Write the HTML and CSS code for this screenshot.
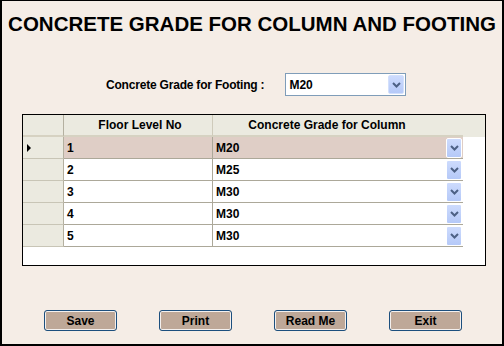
FILE: index.html
```html
<!DOCTYPE html>
<html lang="en">
<head>
  <meta charset="UTF-8">
  <title>Concrete Grade</title>
  <link rel="stylesheet" href="styles.css">
</head>
<body>
  <div class="window">
    <h1 class="title">CONCRETE GRADE FOR COLUMN AND FOOTING</h1>

    <div class="footing">
      <span class="footing-label">Concrete Grade for Footing :</span>
      <div class="combo">
        <span class="combo-text">M20</span>
        <span class="drop"><svg width="9" height="6" viewBox="0 0 9 6"><polyline points="1,1 4.5,4.5 8,1" fill="none" stroke="#4d6185" stroke-width="2"/></svg></span>
      </div>
    </div>

    <div class="grid">
      <div class="grid-head">
        <div class="rowhead"></div>
        <div class="colhead col-floor">Floor Level No</div>
        <div class="colhead col-grade">Concrete Grade for Column</div>
      </div>
      <div class="grid-row selected">
        <div class="rowhead"><span class="pointer"></span></div>
        <div class="cell">1</div>
        <div class="cell cell-combo">M20<span class="drop"><svg width="9" height="6" viewBox="0 0 9 6"><polyline points="1,1 4.5,4.5 8,1" fill="none" stroke="#4d6185" stroke-width="2"/></svg></span></div>
      </div>
      <div class="grid-row">
        <div class="rowhead"></div>
        <div class="cell">2</div>
        <div class="cell cell-combo">M25<span class="drop"><svg width="9" height="6" viewBox="0 0 9 6"><polyline points="1,1 4.5,4.5 8,1" fill="none" stroke="#4d6185" stroke-width="2"/></svg></span></div>
      </div>
      <div class="grid-row">
        <div class="rowhead"></div>
        <div class="cell">3</div>
        <div class="cell cell-combo">M30<span class="drop"><svg width="9" height="6" viewBox="0 0 9 6"><polyline points="1,1 4.5,4.5 8,1" fill="none" stroke="#4d6185" stroke-width="2"/></svg></span></div>
      </div>
      <div class="grid-row">
        <div class="rowhead"></div>
        <div class="cell">4</div>
        <div class="cell cell-combo">M30<span class="drop"><svg width="9" height="6" viewBox="0 0 9 6"><polyline points="1,1 4.5,4.5 8,1" fill="none" stroke="#4d6185" stroke-width="2"/></svg></span></div>
      </div>
      <div class="grid-row">
        <div class="rowhead"></div>
        <div class="cell">5</div>
        <div class="cell cell-combo">M30<span class="drop"><svg width="9" height="6" viewBox="0 0 9 6"><polyline points="1,1 4.5,4.5 8,1" fill="none" stroke="#4d6185" stroke-width="2"/></svg></span></div>
      </div>
    </div>

    <div class="actions">
      <button class="btn">Save</button>
      <button class="btn">Print</button>
      <button class="btn">Read Me</button>
      <button class="btn">Exit</button>
    </div>
  </div>
</body>
</html>
```

FILE: styles.css
```css
body {
  margin: 0;
  font-family: "Liberation Sans", Arial, sans-serif;
  color: #000;
}

.window {
  width: 504px;
  height: 346px;
  box-sizing: border-box;
  background-color: #f5ede6;
  border: 2px solid #000;
  border-top-width: 1px;
}

.title {
  margin: 11px 0 0;
  font-size: 20.5px;
  line-height: 24px;
  font-weight: bold;
  text-align: center;
}

/* footing grade selector */
.footing {
  display: flex;
  align-items: center;
  gap: 21px;
  margin-top: 37px;
  padding-left: 104px;
}

.footing-label {
  font-size: 12px;
  font-weight: bold;
  letter-spacing: -0.2px;
}

.combo {
  width: 121px;
  height: 23px;
  box-sizing: border-box;
  border: 1px solid #7f9db9;
  background-color: #fff;
  display: flex;
  align-items: center;
  justify-content: space-between;
  padding: 0 1px 0 3px;
}

.combo-text {
  font-size: 12px;
  font-weight: bold;
}

.drop {
  width: 16px;
  height: 19px;
  box-sizing: border-box;
  border: 1px solid #d3e0fc;
  border-radius: 2px;
  background: linear-gradient(#cddbfd, #b5c9f8);
  display: flex;
  align-items: center;
  justify-content: center;
}

/* data grid */
.grid {
  width: 464px;
  height: 152px;
  box-sizing: border-box;
  margin: 18px 0 0 20px;
  border: 1px solid #000;
  background-color: #fff;
}

.grid-head,
.grid-row {
  display: grid;
  grid-template-columns: 41px 149px 250px;
  height: 22px;
  font-size: 12px;
  font-weight: bold;
}

.grid-head {
  background-color: #ebeae0;
}

.grid-head .rowhead,
.colhead {
  border-bottom: 2px solid #d6d2c2;
}

.colhead {
  display: flex;
  align-items: center;
  justify-content: center;
  box-sizing: border-box;
}

.col-floor {
  padding-left: 4px;
  border-right: 1px solid #cfcbbb;
}

.col-grade {
  padding-right: 22px;
}

.rowhead {
  background-color: #ebeae0;
  box-sizing: border-box;
  border-right: 1px solid #b4b0a0;
  border-bottom: 1px solid #c8c5b6;
  display: flex;
  align-items: center;
  padding-left: 4px;
}

.pointer {
  width: 0;
  height: 0;
  border-top: 4px solid transparent;
  border-bottom: 4px solid transparent;
  border-left: 4px solid #000;
}

.cell {
  box-sizing: border-box;
  border-bottom: 1px solid #aca899;
  padding-left: 3px;
  padding-top: 1px;
  display: flex;
  align-items: center;
}

.cell:nth-child(2) {
  border-right: 1px solid #aca899;
}

.cell-combo {
  justify-content: space-between;
  padding-right: 1px;
}

.cell-combo .drop {
  height: 20px;
  border-color: #fff;
}

.selected .cell {
  background-color: #dfcec6;
}

/* bottom buttons */
.actions {
  display: flex;
  gap: 42px;
  margin-top: 44px;
  padding-left: 42px;
}

.btn {
  width: 73px;
  height: 21px;
  padding: 0;
  font-family: "Liberation Sans", Arial, sans-serif;
  font-size: 12px;
  font-weight: bold;
  color: #000;
  background-color: #bea898;
  border: 1px solid #1c4f7e;
  border-radius: 3px;
  box-shadow: inset 0 0 0 1px #f4f0ee;
  cursor: pointer;
}
```
